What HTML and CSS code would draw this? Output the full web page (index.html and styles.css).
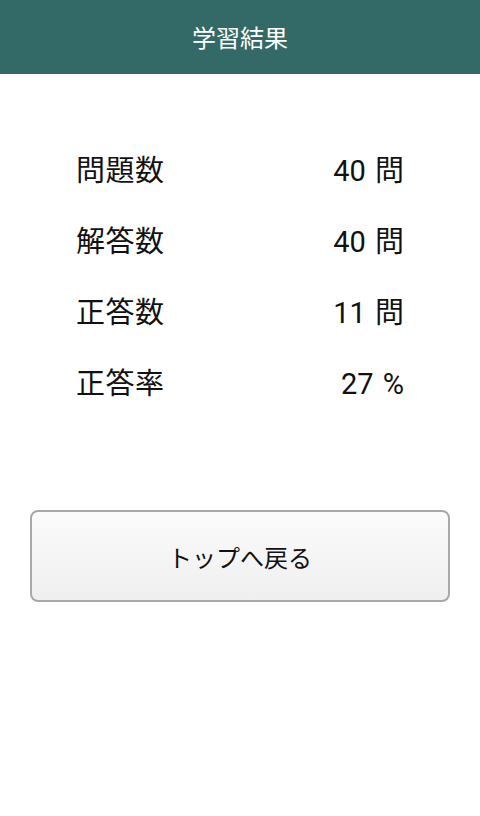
FILE: index.html
```html
<!DOCTYPE html>
<html lang="ja">
<head>
<meta charset="utf-8">
<title>学習結果</title>
<link rel="stylesheet" href="styles.css">
</head>
<body>
<header class="appbar">学習結果</header>
<main class="content">
  <div class="results">
    <div class="row"><span class="label">問題数</span><span class="value">40 問</span></div>
    <div class="row"><span class="label">解答数</span><span class="value">40 問</span></div>
    <div class="row"><span class="label">正答数</span><span class="value">11 問</span></div>
    <div class="row"><span class="label">正答率</span><span class="value">27 %</span></div>
  </div>
  <button class="back-btn" type="button">トップへ戻る</button>
</main>
</body>
</html>
```
FILE: styles.css
```css
html, body {
  margin: 0;
  padding: 0;
  background: #ffffff;
}
body {
  font-family: Roboto, "Noto Sans CJK JP", "Noto Sans", sans-serif;
  color: #111;
}
.appbar {
  height: 74px;
  background: #336966;
  color: #ffffff;
  font-size: 24px;
  display: flex;
  align-items: center;
  justify-content: center;
  padding-bottom: 2px;
  box-sizing: border-box;
}
.content {
  display: flex;
  flex-direction: column;
}
.results {
  padding: 62px 76px 0 76px;
  display: flex;
  flex-direction: column;
}
.row {
  height: 71px;
  display: flex;
  align-items: center;
  justify-content: space-between;
  font-size: 29px;
  line-height: 1;
}
.label {
  letter-spacing: 0.5px;
}
.value {
  word-spacing: 2px;
}
.back-btn {
  margin: 90px 30px 0 30px;
  height: 92px;
  border: 2px solid #a9a9a9;
  border-radius: 8px;
  background: linear-gradient(#fbfbfb, #efefef);
  font-family: Roboto, "Noto Sans CJK JP", sans-serif;
  font-size: 24px;
  color: #111;
  padding: 0;
}
```
